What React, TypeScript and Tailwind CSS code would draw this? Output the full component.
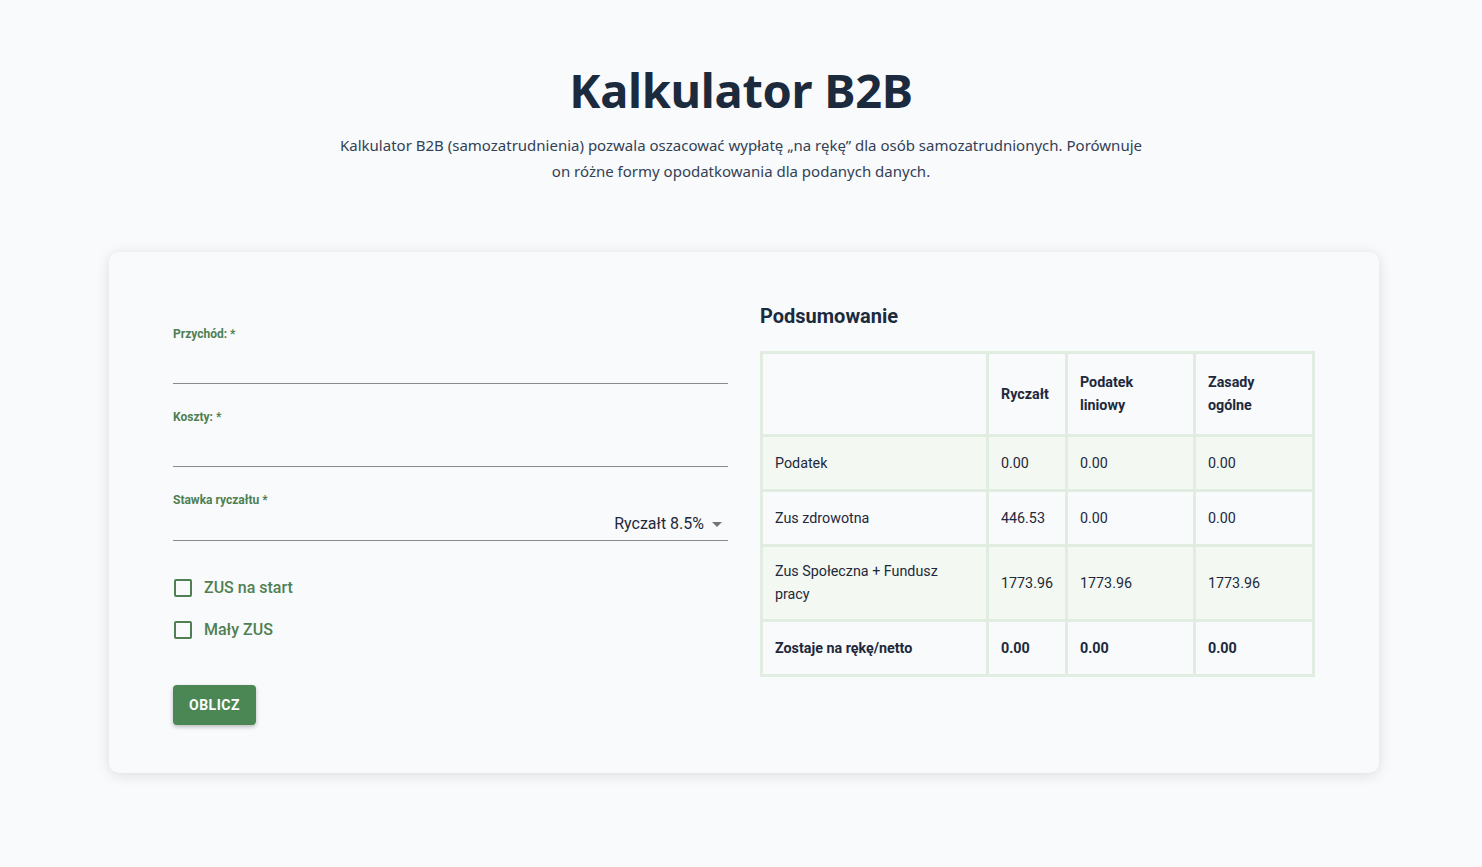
import { useState } from "react";

const rows = [
  { label: "Podatek", values: ["0.00", "0.00", "0.00"], bold: false },
  { label: "Zus zdrowotna", values: ["446.53", "0.00", "0.00"], bold: false },
  { label: "Zus Społeczna + Fundusz pracy", values: ["1773.96", "1773.96", "1773.96"], bold: false },
  { label: "Zostaje na rękę/netto", values: ["0.00", "0.00", "0.00"], bold: true },
];

function Field({ label }: { label: string }) {
  return (
    <div className="flex flex-col">
      <label className="text-[12px] leading-4 font-bold text-[#4f7f52]">{label}</label>
      <input className="h-[42px] border-b border-[#8a8a8a] bg-transparent outline-none text-[16px]" />
    </div>
  );
}

function Check({ label }: { label: string }) {
  const [on, setOn] = useState(false);
  return (
    <label className="flex items-center gap-[12px] h-[24px] cursor-pointer">
      <span
        onClick={() => setOn(!on)}
        className={`ml-[1px] w-[18px] h-[18px] rounded-[2px] border-2 border-[#4f7f52] ${on ? "bg-[#4f7f52]" : ""}`}
      />
      <span className="text-[16px] font-medium text-[#4f7f52]">{label}</span>
    </label>
  );
}

export default function App() {
  return (
    <main className="min-h-screen bg-[#f8fafc] text-[#1e293b] font-['Roboto',sans-serif]">
      <div className="flex flex-col items-center pt-[60px]">
        <h1 className="font-['Noto_Sans',sans-serif] text-[47px] leading-[60px] font-bold text-[#1b2a3d] tracking-[-0.3px]">
          Kalkulator B2B
        </h1>
        <p className="mt-[12px] max-w-[810px] text-center font-['Noto_Sans',sans-serif] text-[15px] leading-[26px] text-[#334155]">
          Kalkulator B2B (samozatrudnienia) pozwala oszacować wypłatę „na rękę” dla osób samozatrudnionych. Porównuje on różne formy opodatkowania dla podanych danych.
        </p>
      </div>

      <div className="ml-[109px] w-[1270px] mt-[68px] bg-[#f8fafc] rounded-[10px] shadow-[0_2px_14px_rgba(0,0,0,0.12)] px-[64px] py-[48px] grid grid-cols-2 gap-[32px]">
        <div className="flex flex-col pt-[26px]">
          <div className="flex flex-col gap-[25px]">
            <Field label="Przychód: *" />
            <Field label="Koszty: *" />
            <div className="flex flex-col">
              <label className="text-[12px] leading-4 font-bold text-[#4f7f52]">Stawka ryczałtu *</label>
              <div className="h-[33px] border-b border-[#8a8a8a] flex items-center justify-end gap-[8px] pr-[6px]">
                <span className="text-[16px] text-[#1e293b]">Ryczałt 8.5%</span>
                <svg width="10" height="5" viewBox="0 0 10 5"><path d="M0 0 L10 0 L5 5 Z" fill="#757575" /></svg>
              </div>
            </div>
          </div>
          <div className="mt-[35px] flex flex-col gap-[18px]">
            <Check label="ZUS na start" />
            <Check label="Mały ZUS" />
          </div>
          <div className="mt-[43px]">
            <button className="h-[40px] px-[16px] rounded-[4px] bg-[#4b8754] text-white text-[14px] font-bold tracking-[0.5px] shadow-[0_2px_4px_rgba(0,0,0,0.25)]">
              OBLICZ
            </button>
          </div>
        </div>

        <div className="flex flex-col">
          <h2 className="text-[20px] leading-[28px] font-bold text-[#1b2a3d] mt-[2px]">Podsumowanie</h2>
          <table className="mt-[21px] w-[555px] border-collapse border-[3px] border-[#e0ede0] text-[14.3px] leading-[23px] text-[#1e293b]">
            <thead>
              <tr className="h-[83px]">
                <th className="w-[226px] border-[3px] border-[#e0ede0]"></th>
                <th className="w-[79px] border-[3px] border-[#e0ede0] text-left font-bold px-[12px]">Ryczałt</th>
                <th className="w-[128px] border-[3px] border-[#e0ede0] text-left font-bold px-[12px]">Podatek<br />liniowy</th>
                <th className="border-[3px] border-[#e0ede0] text-left font-bold px-[12px]">Zasady<br />ogólne</th>
              </tr>
            </thead>
            <tbody>
              {rows.map((r, i) => (
                <tr key={r.label} className={`${i === 2 ? "h-[75px]" : "h-[55px]"} ${i % 2 === 0 ? "bg-[#f3f8f2]" : ""} ${r.bold ? "font-bold" : ""}`}>
                  <td className="border-[3px] border-[#e0ede0] px-[12px] pr-[40px]">{r.label}</td>
                  {r.values.map((v, j) => (
                    <td key={j} className="border-[3px] border-[#e0ede0] px-[12px]">{v}</td>
                  ))}
                </tr>
              ))}
            </tbody>
          </table>
        </div>
      </div>
    </main>
  );
}
